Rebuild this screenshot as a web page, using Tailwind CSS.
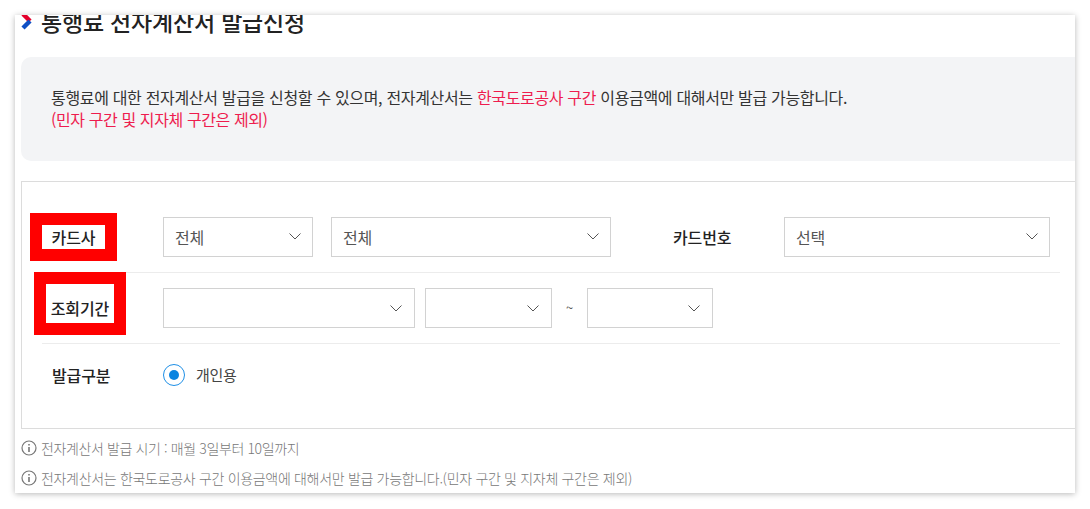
<!DOCTYPE html>
<html lang="ko">
<head>
  <meta charset="UTF-8">
  <title>통행료 전자계산서 발급신청</title>
  <script src="https://cdn.jsdelivr.net/npm/@tailwindcss/browser@4"></script>
</head>
<body class="bg-white font-['Noto_Sans_CJK_KR','Noto_Sans',sans-serif] overflow-hidden">
  <div class="pt-[15px] pl-[15px] h-[509px]">
    <div class="relative w-[1060px] h-[478px] bg-white overflow-hidden shadow-[0_1px_6px_rgba(0,0,0,0.28)] pl-[6px]">

      <!-- title, cut by the top of the frame -->
      <div class="flex items-center gap-[8px] -mt-[8px] h-[28px]">
        <svg class="w-[12px] h-[20px] shrink-0" viewBox="0 0 12 20" fill="none">
          <path d="M2 3 L9 10" stroke="#e4002b" stroke-width="4.4"/>
          <path d="M9 10 L2 17" stroke="#0f4fc4" stroke-width="4.4"/>
        </svg>
        <h1 class="text-[23px] leading-[28px] font-medium text-[#222] tracking-[-0.2px]">통행료 전자계산서 발급신청</h1>
      </div>

      <!-- notice -->
      <div class="mt-[22px] h-[104px] bg-[#f3f4f6] rounded-l-[10px] pl-[30px] pt-[29px] text-[16px] leading-[22px] tracking-[-0.33px] text-[#333]">
        <p>통행료에 대한 전자계산서 발급을 신청할 수 있으며, 전자계산서는 <span class="text-[#ee1c4e]">한국도로공사 구간</span> 이용금액에 대해서만 발급 가능합니다.</p>
        <p class="text-[#ee1c4e] tracking-[-0.4px]">(민자 구간 및 지자체 구간은 제외)</p>
      </div>

      <!-- form -->
      <div class="mt-[20px] h-[248px] border border-r-0 border-[#dcdcdc] pt-[35px] pl-[20px] pr-[15px]">
        <div class="flex items-center h-[40px] text-[16px] leading-[22px] tracking-[-0.1px] text-[#555]">
          <div class="w-[121px]"></div>
          <div class="flex items-center justify-between w-[150px] h-[40px] border border-[#d2d2d2] px-[11px] pb-[1px]">
            <span>전체</span>
            <svg class="w-[12px] h-[7px]" viewBox="0 0 12 7" fill="none"><path d="M0.5 0.5 L6 6 L11.5 0.5" stroke="#555"/></svg>
          </div>
          <div class="flex items-center justify-between w-[280px] h-[40px] border border-[#d2d2d2] px-[11px] pb-[1px] ml-[18px]">
            <span>전체</span>
            <svg class="w-[12px] h-[7px]" viewBox="0 0 12 7" fill="none"><path d="M0.5 0.5 L6 6 L11.5 0.5" stroke="#555"/></svg>
          </div>
          <div class="w-[173px] pl-[62px] pb-[1px] font-medium text-[#222]">카드번호</div>
          <div class="flex items-center justify-between w-[266px] h-[40px] border border-[#d2d2d2] px-[11px] pb-[1px]">
            <span>선택</span>
            <svg class="w-[12px] h-[7px]" viewBox="0 0 12 7" fill="none"><path d="M0.5 0.5 L6 6 L11.5 0.5" stroke="#555"/></svg>
          </div>
        </div>

        <div class="mt-[15px] border-t border-[#ececec] py-[15px] flex items-center h-[71px] text-[16px] text-[#555]">
          <div class="w-[121px]"></div>
          <div class="flex items-center justify-end w-[252px] h-[40px] border border-[#d2d2d2] px-[12px]">
            <svg class="w-[12px] h-[7px]" viewBox="0 0 12 7" fill="none"><path d="M0.5 0.5 L6 6 L11.5 0.5" stroke="#555"/></svg>
          </div>
          <div class="flex items-center justify-end w-[127px] h-[40px] border border-[#d2d2d2] px-[12px] ml-[10px]">
            <svg class="w-[12px] h-[7px]" viewBox="0 0 12 7" fill="none"><path d="M0.5 0.5 L6 6 L11.5 0.5" stroke="#555"/></svg>
          </div>
          <div class="w-[35px] text-center text-[13px] text-[#555]">~</div>
          <div class="flex items-center justify-end w-[126px] h-[40px] border border-[#d2d2d2] px-[12px]">
            <svg class="w-[12px] h-[7px]" viewBox="0 0 12 7" fill="none"><path d="M0.5 0.5 L6 6 L11.5 0.5" stroke="#555"/></svg>
          </div>
        </div>

        <div class="border-t border-[#ececec] flex items-center h-[62px] text-[16px] tracking-[-0.1px]">
          <div class="w-[121px] pl-[10px] font-medium text-[#222]">발급구분</div>
          <div class="flex items-center justify-center w-[22px] h-[22px] rounded-full border border-[#1e8fe6]">
            <div class="w-[10px] h-[10px] rounded-full bg-[#0a84e0]"></div>
          </div>
          <div class="ml-[11px] pt-[1px] text-[15px] tracking-[-0.3px] text-[#444]">개인용</div>
        </div>
      </div>

      <!-- notes -->
      <div class="mt-[8px] flex items-center gap-[4px] h-[22px] text-[14px] font-light tracking-[-0.38px] text-[#777]">
        <svg class="w-[16px] h-[16px] shrink-0" viewBox="0 0 16 16" fill="none">
          <circle cx="8" cy="8" r="7" stroke="#777" stroke-width="1.2"/>
          <path d="M8 7 V12 M8 4 V5.6" stroke="#777" stroke-width="1.6"/>
        </svg>
        <span>전자계산서 발급 시기 : 매월 3일부터 10일까지</span>
      </div>
      <div class="mt-[8px] flex items-center gap-[4px] h-[22px] text-[14px] font-light tracking-[-0.32px] text-[#777]">
        <svg class="w-[16px] h-[16px] shrink-0" viewBox="0 0 16 16" fill="none">
          <circle cx="8" cy="8" r="7" stroke="#777" stroke-width="1.2"/>
          <path d="M8 7 V12 M8 4 V5.6" stroke="#777" stroke-width="1.6"/>
        </svg>
        <span>전자계산서는 한국도로공사 구간 이용금액에 대해서만 발급 가능합니다.(민자 구간 및 지자체 구간은 제외)</span>
      </div>

      <!-- red annotation boxes drawn over the form -->
      <div class="absolute left-[15px] top-[198px] w-[87px] h-[48px] border-[12px] border-[#ff0000] bg-white flex items-center justify-center pb-[1px] text-[16px] tracking-[-0.1px] font-medium text-[#222]">카드사</div>
      <div class="absolute left-[19px] top-[257px] w-[92px] h-[63px] border-[12px] border-[#ff0000] bg-white flex items-center justify-center pt-[8px] text-[16px] tracking-[-0.1px] font-medium text-[#222]">조회기간</div>
    </div>
  </div>
</body>
</html>
